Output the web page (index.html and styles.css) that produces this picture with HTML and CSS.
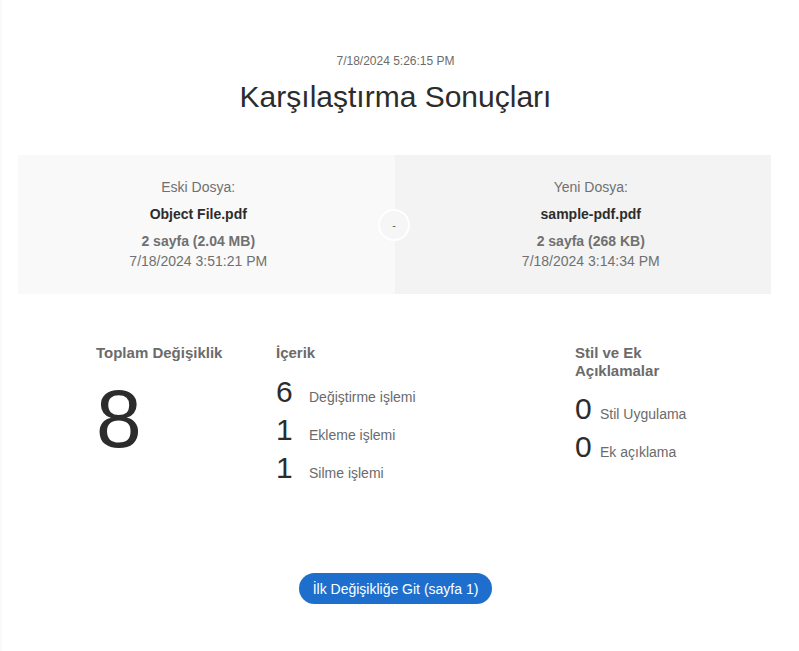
FILE: index.html
```html
<!DOCTYPE html>
<html>

<head>
    <meta charset="utf-8">
    <title>Karşılaştırma Sonuçları</title>
    <link rel="stylesheet" href="styles.css">
</head>

<body>
    <div id="page">
        <div class="stamp">7/18/2024 5:26:15 PM</div>
        <h1>Karşılaştırma Sonuçları</h1>

        <div id="files">
            <div class="file old">
                <div class="label">Eski Dosya:</div>
                <div class="name">Object File.pdf</div>
                <div class="size">2 sayfa (2.04 MB)</div>
                <div class="date">7/18/2024 3:51:21 PM</div>
            </div>
            <div class="file new">
                <div class="label">Yeni Dosya:</div>
                <div class="name">sample-pdf.pdf</div>
                <div class="size">2 sayfa (268 KB)</div>
                <div class="date">7/18/2024 3:14:34 PM</div>
            </div>
            <div class="vs">-</div>
        </div>

        <div id="stats">
            <div class="col total">
                <h2>Toplam Değişiklik</h2>
                <div class="big">8</div>
            </div>
            <div class="col content">
                <h2>İçerik</h2>
                <div class="row"><span class="num">6</span><span class="txt">Değiştirme işlemi</span></div>
                <div class="row"><span class="num">1</span><span class="txt">Ekleme işlemi</span></div>
                <div class="row"><span class="num">1</span><span class="txt">Silme işlemi</span></div>
            </div>
            <div class="col style">
                <h2>Stil ve Ek Açıklamalar</h2>
                <div class="row"><span class="num">0</span><span class="txt">Stil Uygulama</span></div>
                <div class="row"><span class="num">0</span><span class="txt">Ek açıklama</span></div>
            </div>
        </div>

        <div class="go">
            <button id="first">İlk Değişikliğe Git (sayfa 1)</button>
        </div>
    </div>
</body>

</html>
```

FILE: styles.css
```css
body {
    margin: 0;
    background-color: white;
    font-family: "Liberation Sans", Arial, sans-serif;
    color: #2c2c2c;
}

#page {
    padding-top: 54px;
    padding-right: 10px;
    border-left: 2px solid #fafafa;
    min-height: 651px;
    box-sizing: border-box;
}

.stamp {
    text-align: center;
    font-size: 12px;
    color: #6b6b6b;
    line-height: 14px;
}

h1 {
    text-align: center;
    font-weight: normal;
    font-size: 30px;
    line-height: 36px;
    margin: 11px 0 0 0;
    color: #2c2c2c;
}

#files {
    position: relative;
    display: flex;
    margin: 40px 18px 0 16px;
    height: 139px;
}

.file {
    flex: 1;
    text-align: center;
    padding-top: 24px;
    box-sizing: border-box;
    font-size: 14px;
    color: #707070;
}

.old {
    background-color: #f9f9f9;
    padding-right: 16px;
}

.new {
    background-color: #f3f3f3;
    padding-left: 16px;
}

.label {
    line-height: 17px;
}

.name {
    font-weight: bold;
    color: #2c2c2c;
    margin-top: 10px;
    line-height: 17px;
}

.size {
    font-weight: bold;
    margin-top: 10px;
    line-height: 17px;
}

.date {
    margin-top: 1px;
    line-height: 20px;
}

.vs {
    position: absolute;
    left: 360px;
    top: 54px;
    width: 28px;
    height: 28px;
    border: 2px solid white;
    border-radius: 50%;
    background-color: #f6f6f6;
    color: #555;
    font-size: 11px;
    line-height: 28px;
    text-align: center;
}

#stats {
    display: flex;
    padding-left: 94px;
    margin-top: 50px;
}

.col h2 {
    font-size: 15px;
    font-weight: bold;
    color: #6b6b6b;
    margin: 0;
    line-height: 18px;
}

.total {
    width: 180px;
}

.content {
    width: 299px;
}

.style {
    width: 112px;
}

.big {
    font-size: 82px;
    line-height: 90px;
    margin-top: 12px;
    color: #2c2c2c;
}

.row {
    display: flex;
    align-items: baseline;
    height: 38px;
}

.content .row:first-of-type {
    margin-top: 11px;
}

.style .row:first-of-type {
    margin-top: 10px;
}

.num {
    font-size: 30px;
    line-height: 38px;
    color: #2c2c2c;
    width: 33px;
}

.style .num {
    width: 25px;
}

.txt {
    font-size: 14px;
    color: #6b6b6b;
}

.go {
    display: flex;
    justify-content: center;
    margin-top: 86px;
}

#first {
    background-color: #1e6fcd;
    color: white;
    border: none;
    border-radius: 16px;
    font-family: "Liberation Sans", Arial, sans-serif;
    font-size: 14px;
    height: 31px;
    padding: 0 14px;
}
```
